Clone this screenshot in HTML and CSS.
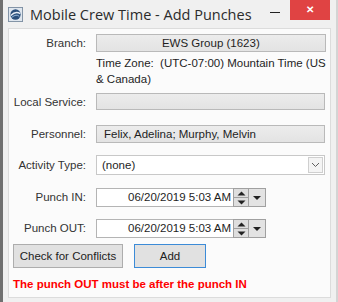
FILE: index.html
```html
<!DOCTYPE html>
<html lang="en">
  <head>
    <meta charset="UTF-8" />
    <title>Mobile Crew Time - Add Punches</title>
    <link rel="stylesheet" href="styles.css">
  </head>
  <body>
    <div class="window">
      <div class="titlebar">
        <svg class="app-icon" width="15" height="15" viewBox="0 0 16 16">
          <rect x="0.5" y="0.5" width="15" height="15" fill="#dfe6ee" stroke="#7d8fa3"/>
          <circle cx="8" cy="8" r="5.5" fill="#2b4f7a"/>
          <path d="M3 9 Q8 4 13 7" stroke="#e8eef5" stroke-width="1.6" fill="none"/>
          <path d="M4 11 Q9 7 12 10" stroke="#9fc0e0" stroke-width="1" fill="none"/>
        </svg>
        <span class="title">Mobile Crew Time - Add Punches</span>
        <span class="min-btn"></span>
        <span class="close-btn">&#x2715;</span>
      </div>

      <div class="panel">
        <div class="row branch">
          <label>Branch:</label>
          <div class="field">
            <div class="box readonly center">EWS Group (1623)</div>
            <div class="tz">Time Zone:&nbsp; (UTC-07:00) Mountain Time (US<br>&amp; Canada)</div>
          </div>
        </div>

        <div class="row local">
          <label>Local Service:</label>
          <div class="field"><div class="box readonly short"></div></div>
        </div>

        <div class="row personnel">
          <label>Personnel:</label>
          <div class="field"><div class="box readonly">Felix, Adelina; Murphy, Melvin</div></div>
        </div>

        <div class="row activity">
          <label>Activity Type:</label>
          <div class="field">
            <div class="box select">
              <span>(none)</span>
              <span class="drop">
                <svg width="9" height="6" viewBox="0 0 9 6"><path d="M1 1 L4.5 4.5 L8 1" stroke="#606060" fill="none"/></svg>
              </span>
            </div>
          </div>
        </div>

        <div class="row punch-in">
          <label>Punch IN:</label>
          <div class="picker">
            <div class="box date">06/20/2019 5:03 AM</div>
            <div class="spin">
              <span class="up"><svg width="9" height="5" viewBox="0 0 9 5"><path d="M0.5 4.5 L4.5 0.5 L8.5 4.5 Z" fill="#222"/></svg></span>
              <span class="down"><svg width="9" height="5" viewBox="0 0 9 5"><path d="M0.5 0.5 L4.5 4.5 L8.5 0.5 Z" fill="#222"/></svg></span>
            </div>
            <div class="cal"><svg width="8" height="4" viewBox="0 0 8 4"><path d="M0 0 L8 0 L4 4 Z" fill="#222"/></svg></div>
          </div>
        </div>

        <div class="row punch-out">
          <label>Punch OUT:</label>
          <div class="picker">
            <div class="box date">06/20/2019 5:03 AM</div>
            <div class="spin">
              <span class="up"><svg width="9" height="5" viewBox="0 0 9 5"><path d="M0.5 4.5 L4.5 0.5 L8.5 4.5 Z" fill="#222"/></svg></span>
              <span class="down"><svg width="9" height="5" viewBox="0 0 9 5"><path d="M0.5 0.5 L4.5 4.5 L8.5 0.5 Z" fill="#222"/></svg></span>
            </div>
            <div class="cal"><svg width="8" height="4" viewBox="0 0 8 4"><path d="M0 0 L8 0 L4 4 Z" fill="#222"/></svg></div>
          </div>
        </div>

        <div class="buttons">
          <button class="btn">Check for Conflicts</button>
          <button class="btn primary">Add</button>
        </div>

        <div class="error">The punch OUT must be after the punch IN</div>
      </div>
    </div>
  </body>
</html>
```

FILE: styles.css
```css
body {
  margin: 0;
  padding: 0;
  background: #f0f0f0;
  font-family: "Liberation Sans", Arial, sans-serif;
  font-size: 11.5px;
  color: #1e1e1e;
}
.window {
  width: 338px;
  height: 302px;
  box-sizing: border-box;
  border-left: 3px solid #707070;
  border-right: 2px solid #d4d4d4;
  background: #f0f0f0;
  display: flex;
  flex-direction: column;
}
.titlebar {
  height: 28px;
  flex: none;
  display: flex;
  align-items: center;
  padding-left: 5px;
}
.app-icon {
  margin-right: 7px;
  margin-top: 1px;
}
.title {
  font-family: "Open Sans", "Noto Sans", sans-serif;
  font-size: 14.5px;
  color: #2b2b2b;
  flex: 1;
  white-space: nowrap;
  margin-top: 1px;
}
.min-btn {
  width: 10px;
  height: 1px;
  background: #222;
  margin-right: 10px;
  margin-bottom: 4px;
}
.close-btn {
  align-self: flex-start;
  width: 40px;
  height: 20px;
  margin-right: 6px;
  background: #e04343;
  color: #fff;
  font-size: 10px;
  font-weight: bold;
  text-align: center;
  line-height: 20px;
}
.panel {
  margin: 0 5px 0 5px;
  height: 270px;
  box-sizing: border-box;
  background: #fbfbfb;
  border: 1px solid #dcdcdc;
  padding: 5px 5px 0 4px;
  display: flex;
  flex-direction: column;
}
.row {
  display: flex;
  gap: 10px;
}
.row label {
  width: 73px;
  text-align: right;
  flex: none;
  white-space: nowrap;
  color: #333;
  line-height: 18px;
}
.local { margin-top: 6px; }
.personnel { margin-top: 14px; }
.activity { margin-top: 12px; }
.activity label { line-height: 20px; }
.punch-in { margin-top: 13px; }
.punch-out { margin-top: 12px; }
.punch-in label, .punch-out label { line-height: 19px; }
.field {
  flex: 1;
}
.box {
  height: 17px;
  box-sizing: border-box;
  border: 1px solid #b4b4b4;
  background: #ffffff;
  line-height: 15px;
  padding: 0 7px;
  white-space: nowrap;
}
.readonly {
  background: linear-gradient(#ececec, #e3e3e3);
  border-color: #b9b9b9;
  height: 18px;
  line-height: 16px;
}
.short {
  height: 17px;
}
.center {
  text-align: center;
}
.tz {
  margin-top: 3px;
  line-height: 16px;
  white-space: nowrap;
}
.select {
  height: 20px;
  line-height: 18px;
  padding-right: 0;
  padding-left: 5px;
  display: flex;
  justify-content: space-between;
  border-color: #c8c8c8;
}
.drop {
  width: 15px;
  border: 1px solid #cfcfcf;
  margin: 1px;
  height: 16px;
  box-sizing: border-box;
  background: #f4f4f4;
  display: flex;
  align-items: center;
  justify-content: center;
}
.picker {
  display: flex;
  height: 19px;
}
.date {
  width: 137px;
  height: 19px;
  line-height: 17px;
  text-align: right;
  padding: 0 2px;
  border-right: none;
}
.spin {
  width: 16px;
  box-sizing: border-box;
  border: 1px solid #a0a0a0;
  background: #dedede;
  display: flex;
  flex-direction: column;
}
.spin span {
  flex: 1;
  display: flex;
  align-items: center;
  justify-content: center;
}
.spin .up {
  border-bottom: 1px solid #a0a0a0;
}
.cal {
  width: 17px;
  box-sizing: border-box;
  border: 1px solid #a0a0a0;
  border-left: none;
  background: #e3e3e3;
  display: flex;
  align-items: center;
  justify-content: center;
}
.buttons {
  display: flex;
  gap: 11px;
  margin-top: 6px;
}
.btn {
  font-family: "Liberation Sans", Arial, sans-serif;
  font-size: 11.5px;
  color: #222;
  height: 24px;
  background: #e1e1e1;
  border: 1px solid #adadad;
  padding: 0;
  width: 110px;
}
.primary {
  width: 72px;
  border: 1px solid #3c8bd7;
}
.error {
  color: #ff0000;
  font-weight: bold;
  font-size: 11.5px;
  line-height: 14px;
  margin-top: 9px;
}
```
